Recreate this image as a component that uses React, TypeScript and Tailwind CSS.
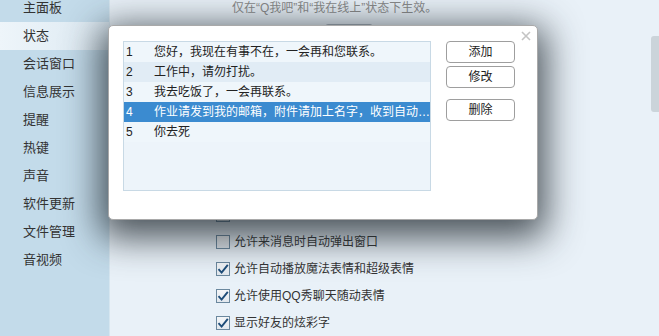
import React from "react";

const menu = ["主面板", "状态", "会话窗口", "信息展示", "提醒", "热键", "声音", "软件更新", "文件管理", "音视频"];

const replies = [
  "您好，我现在有事不在，一会再和您联系。",
  "工作中，请勿打扰。",
  "我去吃饭了，一会再联系。",
  "作业请发到我的邮箱，附件请加上名字，收到自动…",
  "你去死",
];

const options = [
  { label: "收到消息时自动回复对方", checked: true },
  { label: "允许来消息时自动弹出窗口", checked: false },
  { label: "允许自动播放魔法表情和超级表情", checked: true },
  { label: "允许使用QQ秀聊天随动表情", checked: true },
  { label: "显示好友的炫彩字", checked: true },
];

const Check = ({ checked }: { checked: boolean }) => (
  <span className="w-[14px] h-[14px] border border-[#6b889e] bg-gradient-to-b from-[#f4f6f8] to-[#e2e8ee] flex items-center justify-center shrink-0">
    {checked && (
      <svg width="12" height="12" viewBox="0 0 12 12">
        <path d="M1.5 6.2 L4.6 9.6 L10.8 1.8" fill="none" stroke="#1d4c78" strokeWidth="1.9" />
      </svg>
    )}
  </span>
);

export default function App() {
  return (
    <div
      className="relative w-[659px] h-[336px] flex overflow-hidden text-[12px] text-[#222]"
      style={{ fontFamily: '"Liberation Sans", "Noto Sans CJK SC", sans-serif' }}
    >
      {/* sidebar */}
      <div className="w-[110px] shrink-0 bg-[#c3dbea] border-r border-[#d6e6f0] flex flex-col -mt-[6px]">
        {menu.map((m, i) => (
          <div
            key={m}
            className={`h-[28px] flex items-center pl-[23px] text-[13px] text-[#333] ${
              i === 1 ? "bg-gradient-to-r from-[#eef5fa] to-[#dce9f2]" : ""
            }`}
          >
            {m}
          </div>
        ))}
      </div>

      {/* main */}
      <div className="flex-1 bg-[#e9f1f8] flex flex-col relative">
        <div className="pl-[122px] h-[16px] flex items-center text-[12px] text-[#8a8a8a]">
          仅在“Q我吧”和“我在线上”状态下生效。
        </div>
        <div className="ml-[215px] mt-[8px] w-[48px] h-[20px] border border-[#a6b1ba] rounded-[3px] flex">
          <div className="w-[26px] border-r border-[#a6b1ba]" />
        </div>
        <div className="mt-[165px] pl-[106px] flex flex-col">
          {options.map((o) => (
            <div key={o.label} className="h-[27px] flex items-center gap-[4px] text-[12px] text-[#333]">
              <Check checked={o.checked} />
              <span>{o.label}</span>
            </div>
          ))}
        </div>
        {/* scrollbar */}
        <div className="absolute right-0 top-[36px] w-[8px] h-[76px] rounded-l-[3px] bg-[#cbd4da]" />
      </div>

      {/* dialog */}
      <div className="absolute left-[108px] top-[25px] w-[430px] h-[195px] bg-white rounded-[5px] border border-[#a9a9a9] shadow-[0_10px_36px_8px_rgba(30,38,45,0.78)]">
        <svg className="absolute right-[6px] top-[5px]" width="10" height="10" viewBox="0 0 10 10">
          <path d="M1 1 L9 9 M9 1 L1 9" stroke="#c4c4c4" strokeWidth="1.6" />
        </svg>
        <div className="flex mt-[15px] ml-[14px]">
          <div className="w-[308px] h-[150px] border border-[#c8d9e5] bg-[#edf4fa] flex flex-col">
            {replies.map((r, i) => (
              <div
                key={i}
                className={`h-[20px] flex items-center shrink-0 ${
                  i === 3
                    ? "bg-[#3b8bd0] text-white"
                    : i === 1
                    ? "bg-[#e1ecf5]"
                    : "bg-[#eff6fb]"
                }`}
              >
                <span className="w-[30px] pl-[2px] shrink-0">{i + 1}</span>
                <span className="whitespace-nowrap">{r}</span>
              </div>
            ))}
          </div>
          <div className="ml-[15px] flex flex-col">
            <button className="w-[69px] h-[22px] border border-[#9e9e9e] rounded-[4px] bg-white text-[12px] text-[#222]">
              添加
            </button>
            <button className="mt-[3px] w-[69px] h-[22px] border border-[#9e9e9e] rounded-[4px] bg-white text-[12px] text-[#222]">
              修改
            </button>
            <button className="mt-[11px] w-[69px] h-[22px] border border-[#9e9e9e] rounded-[4px] bg-white text-[12px] text-[#222]">
              删除
            </button>
          </div>
        </div>
      </div>
    </div>
  );
}
